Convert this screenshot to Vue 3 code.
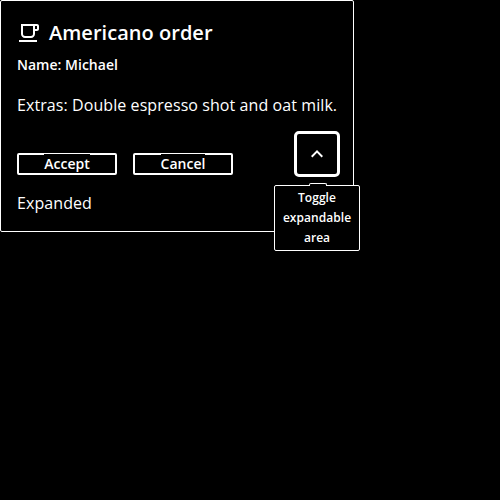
<script setup>
import { ref } from 'vue'

const expanded = ref(true)
</script>

<template>
  <main class="page">
    <article class="card">
      <header class="card-header">
        <svg class="cup" viewBox="0 0 24 24" width="24" height="24" fill="currentColor" aria-hidden="true">
          <path d="M16 5v8c0 1.1-.9 2-2 2H8c-1.1 0-2-.9-2-2V5h10m4-2H4v10c0 2.21 1.79 4 4 4h6c2.21 0 4-1.79 4-4v-3h2c1.11 0 2-.89 2-2V5c0-1.11-.89-2-2-2zm-2 5V5h2v3h-2zm2 11H2v2h18v-2z" />
        </svg>
        <h4>Americano order</h4>
      </header>
      <p class="subheading">Name: Michael</p>
      <p class="message">Extras: Double espresso shot and oat milk.</p>
      <div class="actions">
        <div class="buttons">
          <button class="button"><span>Accept</span></button>
          <button class="button"><span>Cancel</span></button>
        </div>
        <div class="toggle-wrap">
          <button class="toggle" aria-describedby="tip" @click="expanded = !expanded">
            <svg viewBox="0 0 24 24" width="24" height="24" fill="currentColor" aria-hidden="true">
              <path d="M7.41 15.41L12 10.83l4.59 4.58L18 14l-6-6-6 6z" />
            </svg>
          </button>
          <div id="tip" class="tooltip" role="tooltip">Toggle expandable area</div>
        </div>
      </div>
      <p v-if="expanded" class="expanded">Expanded</p>
    </article>
  </main>
</template>

<style>
body {
  background: #000;
}
</style>

<style scoped>
.page {
  min-height: 500px;
  background: #000;
  color: #fff;
  font-family: "Open Sans", "Noto Sans", sans-serif;
}
.card {
  box-sizing: border-box;
  width: 354px;
  height: 232px;
  padding: 16px;
  border: 1px solid #fff;
  border-radius: 2px;
}
.card-header {
  display: flex;
  align-items: center;
  gap: 8px;
  height: 32px;
}
h4,
p {
  margin: 0;
}
h4 {
  font-size: 20px;
  line-height: 32px;
  font-weight: 600;
  letter-spacing: 0.0015em;
  white-space: nowrap;
}
.subheading {
  padding-top: 4px;
  font-size: 14px;
  line-height: 24px;
  font-weight: 600;
  letter-spacing: 0.001em;
}
.message {
  margin-top: 16px;
  font-size: 16px;
  line-height: 24px;
  letter-spacing: 0.005em;
  white-space: nowrap;
}
.actions {
  display: flex;
  justify-content: space-between;
  height: 46px;
  margin: 14px -3px 0 0;
}
.buttons {
  display: flex;
  gap: 16px;
  padding-top: 22px;
}
button {
  box-sizing: border-box;
  display: flex;
  align-items: center;
  justify-content: center;
  padding: 0;
  background: #000;
  color: #fff;
  font-family: inherit;
}
.button {
  width: 100px;
  height: 22px;
  border: 2px solid #fff;
  border-radius: 2px;
  font-size: 14px;
  font-weight: 600;
  line-height: 20px;
}
.button span {
  background: #000;
  height: 19px;
  margin-bottom: 1px;
}
.toggle-wrap {
  position: relative;
}
.toggle {
  width: 46px;
  height: 46px;
  border: 3px solid #fff;
  border-radius: 5px;
}
.toggle svg {
  display: block;
}
.tooltip {
  position: absolute;
  top: 54px;
  left: -20px;
  box-sizing: border-box;
  width: 86px;
  height: 66px;
  padding: 2px 7px;
  border: 1px solid #fff;
  border-radius: 2px;
  background: #000;
  font-size: 12px;
  line-height: 20px;
  font-weight: 600;
  letter-spacing: 0.004em;
  text-align: center;
}
.tooltip::before {
  content: "";
  position: absolute;
  top: -3px;
  left: 34px;
  box-sizing: border-box;
  width: 18px;
  height: 3px;
  border: 1px solid #fff;
  border-bottom: 0;
  border-radius: 2px 2px 0 0;
  background: #000;
}
.expanded {
  margin-top: 14px;
  font-size: 16px;
  line-height: 24px;
  letter-spacing: 0.005em;
}
</style>
